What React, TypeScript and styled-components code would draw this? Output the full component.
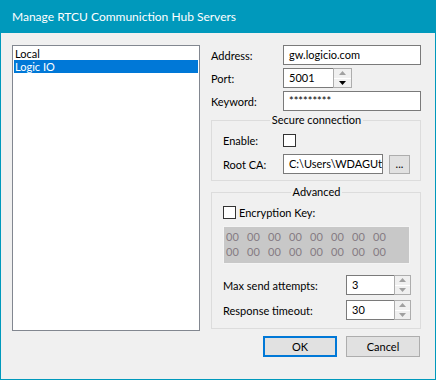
import styled, { createGlobalStyle } from "styled-components";

const TEAL = "#0099bc";

const GlobalStyle = createGlobalStyle`
  * { box-sizing: border-box; }
  html, body { margin: 0; padding: 0; background: #f0f0f0; }
  body {
    font-family: Lato, "Noto Sans", sans-serif;
    font-size: 11px;
    color: #000;
  }
`;

const Window = styled.div`
  width: 436px;
  height: 380px;
  display: flex;
  flex-direction: column;
  background: #f0f0f0;
  border: 1px solid ${TEAL};
  border-top: none;
`;

const TitleBar = styled.div`
  height: 33px;
  margin: 0 -1px;
  padding-left: 12px;
  background: ${TEAL};
  color: #fff;
  font-size: 12px;
  line-height: 33px;
  white-space: nowrap;
`;

const Body = styled.div`
  flex: 1;
  display: flex;
  align-items: flex-start;
  gap: 11px;
  padding: 12px 0 0 11px;
`;

const ServerList = styled.div`
  width: 188px;
  height: 286px;
  padding: 1px;
  background: #fff;
  border: 1px solid #828790;
`;

const ListItem = styled.div<{ $selected?: boolean }>`
  height: 13px;
  line-height: 13px;
  padding-left: 1px;
  white-space: nowrap;
  background: ${({ $selected }) => ($selected ? "#0078d7" : "transparent")};
  color: ${({ $selected }) => ($selected ? "#fff" : "#000")};
`;

const Panel = styled.div`
  width: 210px;
  display: flex;
  flex-direction: column;
`;

const FieldGrid = styled.div<{ $cols: string; $gap: number }>`
  display: grid;
  grid-template-columns: ${({ $cols }) => $cols};
  grid-auto-rows: 20px;
  row-gap: ${({ $gap }) => $gap}px;
  align-items: center;
`;

const Label = styled.span`
  white-space: nowrap;
`;

const TextBox = styled.div<{ $width?: number }>`
  width: ${({ $width }) => ($width ? `${$width}px` : "auto")};
  height: 20px;
  padding: 0 5px;
  line-height: 18px;
  background: #fff;
  border: 1px solid #7a7a7a;
  white-space: nowrap;
  overflow: hidden;
`;

const Spin = styled.div<{ $width: number }>`
  width: ${({ $width }) => $width}px;
  height: 20px;
  display: flex;
`;

const SpinText = styled.div`
  flex: 1;
  padding: 0 5px;
  line-height: 18px;
  background: #fff;
  border: 1px solid #7a7a7a;
  border-right: none;
`;

const SpinButtons = styled.div<{ $width: number }>`
  width: ${({ $width }) => $width}px;
  display: flex;
  flex-direction: column;
  border: 1px solid #adadad;
  background: #fff;
`;

const SpinHalf = styled.div<{ $dark?: boolean }>`
  flex: 1;
  display: flex;
  align-items: center;
  justify-content: center;
  background: #f0f0f0;
  color: ${({ $dark }) => ($dark ? "#000" : "#a0a0a0")};
  & + & {
    border-top: 1px solid #fff;
  }
`;

const GroupBox = styled.fieldset<{ $top: number; $pb: number }>`
  margin: ${({ $top }) => $top}px 0 0;
  padding: 3px 10px ${({ $pb }) => $pb}px 11px;
  border: 1px solid #dcdcdc;
  min-width: 0;
`;

const GroupTitle = styled.legend`
  margin: 0 auto;
  padding: 0 2px;
  line-height: 14px;
`;

const CheckBox = styled.span`
  display: inline-block;
  width: 13px;
  height: 13px;
  background: #fff;
  border: 1px solid #333;
`;

const Row = styled.div<{ $gap: number }>`
  display: flex;
  align-items: center;
  gap: ${({ $gap }) => $gap}px;
  height: 20px;
`;

const SmallButton = styled.div`
  width: 21px;
  height: 19px;
  display: flex;
  align-items: center;
  justify-content: center;
  background: #e1e1e1;
  border: 1px solid #adadad;
  line-height: 1;
  padding-bottom: 2px;
`;

const KeyBox = styled.div`
  margin-top: 4px;
  height: 38px;
  padding: 2px 0 0 2px;
  background: #c8c8c8;
  border: 1px solid #f4f4f4;
  color: #857b83;
  display: grid;
  grid-template-columns: repeat(8, 21px);
  grid-auto-rows: 15px;
  line-height: 15px;
`;

const AdvancedGrid = styled(FieldGrid)`
  margin-top: 11px;
`;

const ButtonRow = styled.div`
  margin-top: 7px;
  padding-right: 1px;
  display: flex;
  justify-content: flex-end;
  gap: 9px;
`;

const DialogButton = styled.div<{ $default?: boolean }>`
  width: 74px;
  height: 21px;
  display: flex;
  align-items: center;
  justify-content: center;
  background: #e1e1e1;
  border: ${({ $default }) => ($default ? "2px solid #0078d7" : "1px solid #adadad")};
`;

const Arrow = ({ up }: { up?: boolean }) => (
  <svg width="7" height="4" viewBox="0 0 7 4">
    <path d={up ? "M0 4 L3.5 0 L7 4 Z" : "M0 0 L7 0 L3.5 4 Z"} fill="currentColor" />
  </svg>
);

const SpinBox = ({ value, width, buttons, darkDown }: { value: string; width: number; buttons: number; darkDown?: boolean }) => (
  <Spin $width={width}>
    <SpinText>{value}</SpinText>
    <SpinButtons $width={buttons}>
      <SpinHalf>
        <Arrow up />
      </SpinHalf>
      <SpinHalf $dark={darkDown}>
        <Arrow />
      </SpinHalf>
    </SpinButtons>
  </Spin>
);

const keyBytes = Array.from({ length: 16 }, () => "00");

export default function App() {
  return (
    <>
      <GlobalStyle />
      <Window>
        <TitleBar>Manage RTCU Communiction Hub Servers</TitleBar>
        <Body>
          <ServerList>
            <ListItem>Local</ListItem>
            <ListItem $selected>Logic IO</ListItem>
          </ServerList>
          <Panel>
            <FieldGrid $cols="72px 138px" $gap={3}>
              <Label>Address:</Label>
              <TextBox>gw.logicio.com</TextBox>
              <Label>Port:</Label>
              <SpinBox value="5001" width={69} buttons={19} darkDown />
              <Label>Keyword:</Label>
              <TextBox>*********</TextBox>
            </FieldGrid>

            <GroupBox $top={2} $pb={6}>
              <GroupTitle>Secure connection</GroupTitle>
              <FieldGrid $cols="60px 1fr" $gap={4}>
                <Label>Enable:</Label>
                <Row $gap={0}>
                  <CheckBox />
                </Row>
                <Label>Root CA:</Label>
                <Row $gap={6}>
                  <TextBox $width={100}>C:\Users\WDAGUtil</TextBox>
                  <SmallButton>...</SmallButton>
                </Row>
              </FieldGrid>
            </GroupBox>

            <GroupBox $top={4} $pb={8}>
              <GroupTitle>Advanced</GroupTitle>
              <Row $gap={3}>
                <CheckBox />
                <Label>Encryption Key:</Label>
              </Row>
              <KeyBox>
                {keyBytes.map((b, i) => (
                  <span key={i}>{b}</span>
                ))}
              </KeyBox>
              <AdvancedGrid $cols="123px 65px" $gap={5}>
                <Label>Max send attempts:</Label>
                <SpinBox value="3" width={65} buttons={17} />
                <Label>Response timeout:</Label>
                <SpinBox value="30" width={65} buttons={17} />
              </AdvancedGrid>
            </GroupBox>

            <ButtonRow>
              <DialogButton $default>OK</DialogButton>
              <DialogButton>Cancel</DialogButton>
            </ButtonRow>
          </Panel>
        </Body>
      </Window>
    </>
  );
}
